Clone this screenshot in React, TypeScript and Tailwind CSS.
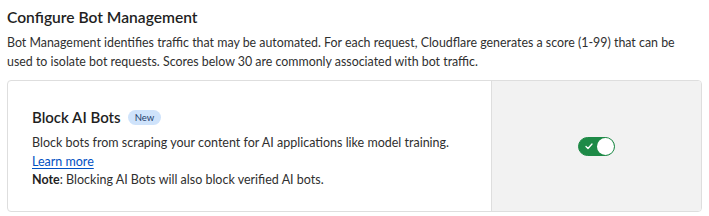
import React, { useState } from 'react';

export default function App() {
  const [enabled, setEnabled] = useState(true);

  return (
    <div className="bg-white w-[709px] h-[216px] px-[7px] pt-[5px] text-[#2f2f2f]" style={{ fontFamily: 'Lato, "Open Sans", sans-serif' }}>
      <h2 className="text-[15.6px] font-semibold leading-[24px] text-[#1f1f1f]">Configure Bot Management</h2>
      <p className="mt-[4px] text-[12.4px] leading-[19px]">
        Bot Management identifies traffic that may be automated. For each request, Cloudflare generates a score (1-99) that can be used to isolate bot requests. Scores below 30 are commonly associated with bot traffic.
      </p>

      {/* Block AI bots card */}
      <div className="mt-[9px] flex h-[132px] rounded-[4px] border border-[#dedede] overflow-hidden">
        <div className="flex-1 flex flex-col justify-center pl-[24px] pr-4 pt-[4px] border-r border-[#dedede]">
          <div className="flex items-center gap-[7px]">
            <span className="text-[15px] font-semibold leading-[22px] text-[#1f1f1f]">Block AI Bots</span>
            <span className="rounded-full bg-[#cfe3fb] px-[7px] text-[9.5px] leading-[15px] text-[#1d3d6b]">New</span>
          </div>
          <div className="mt-[6px] text-[12.5px] leading-[18.5px]">
            <div>Block bots from scraping your content for AI applications like model training.</div>
            <a href="#" className="text-[#0051c3] underline underline-offset-2">Learn more</a>
            <div><span className="font-bold text-[#1f1f1f]">Note</span>: Blocking AI Bots will also block verified AI bots.</div>
          </div>
        </div>
        <div className="w-[209px] bg-[#f2f2f2] flex items-center justify-center">
          <button
            onClick={() => setEnabled(!enabled)}
            className={`relative w-[37px] h-[19px] rounded-full border ${enabled ? 'bg-[#1e8a47] border-[#1e8a47]' : 'bg-[#bbb] border-[#bbb]'}`}
          >
            {enabled && (
              <svg className="absolute left-[6px] top-[5px]" width="8" height="7" viewBox="0 0 8 7" fill="none">
                <path d="M1 3.5 L3 5.5 L7 1" stroke="white" strokeWidth="1.3" strokeLinecap="round" strokeLinejoin="round" />
              </svg>
            )}
            <span className={`absolute top-0 w-[17px] h-[17px] rounded-full bg-white ${enabled ? 'right-0' : 'left-0'}`} />
          </button>
        </div>
      </div>
    </div>
  );
}
